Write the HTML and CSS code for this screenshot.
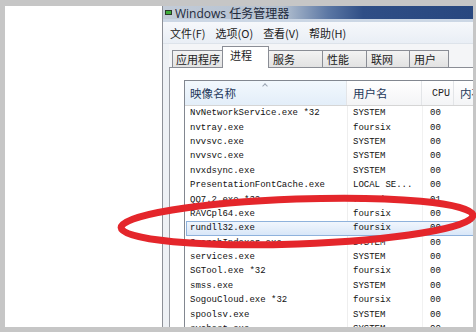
FILE: index.html
```html
<!DOCTYPE html>
<html>

<head>
    <meta charset="utf-8" />
    <title>Windows 任务管理器</title>
    <link rel="stylesheet" href="styles.css">
</head>

<body>
    <div class="sheet">
        <div class="blank"></div>

        <div class="window">
            <div class="titlebar">
                <span class="app-icon"></span>
                <span class="title">Windows 任务管理器</span>
            </div>

            <div class="menubar">
                <span>文件(F)</span>
                <span>选项(O)</span>
                <span>查看(V)</span>
                <span>帮助(H)</span>
            </div>

            <div class="client">
                <div class="tabstrip">
                    <div class="tab w-apps">应用程序</div>
                    <div class="tab active w-proc">进程</div>
                    <div class="tab w-svc">服务</div>
                    <div class="tab w-perf">性能</div>
                    <div class="tab w-net">联网</div>
                    <div class="tab w-user">用户</div>
                </div>

                <div class="panel">
                    <div class="listview">
                        <div class="lv-head">
                            <div class="col-name sorted">映像名称<span class="sort-arrow"></span></div>
                            <div class="col-user">用户名</div>
                            <div class="col-cpu">CPU</div>
                            <div class="col-mem">内存</div>
                        </div>

                        <div class="lv-row"><div class="col-name">NvNetworkService.exe *32</div><div class="col-user">SYSTEM</div><div class="col-cpu">00</div></div>
                        <div class="lv-row"><div class="col-name">nvtray.exe</div><div class="col-user">foursix</div><div class="col-cpu">00</div></div>
                        <div class="lv-row"><div class="col-name">nvvsvc.exe</div><div class="col-user">SYSTEM</div><div class="col-cpu">00</div></div>
                        <div class="lv-row"><div class="col-name">nvvsvc.exe</div><div class="col-user">SYSTEM</div><div class="col-cpu">00</div></div>
                        <div class="lv-row"><div class="col-name">nvxdsync.exe</div><div class="col-user">SYSTEM</div><div class="col-cpu">00</div></div>
                        <div class="lv-row"><div class="col-name">PresentationFontCache.exe</div><div class="col-user">LOCAL SE...</div><div class="col-cpu">00</div></div>
                        <div class="lv-row"><div class="col-name">QQ7.2.exe *32</div><div class="col-user">foursix</div><div class="col-cpu">01</div></div>
                        <div class="lv-row"><div class="col-name">RAVCpl64.exe</div><div class="col-user">foursix</div><div class="col-cpu">00</div></div>
                        <div class="lv-row selected"><div class="col-name">rundll32.exe</div><div class="col-user">foursix</div><div class="col-cpu">00</div></div>
                        <div class="lv-row"><div class="col-name">SearchIndexer.exe</div><div class="col-user">SYSTEM</div><div class="col-cpu">00</div></div>
                        <div class="lv-row"><div class="col-name">services.exe</div><div class="col-user">SYSTEM</div><div class="col-cpu">00</div></div>
                        <div class="lv-row"><div class="col-name">SGTool.exe *32</div><div class="col-user">foursix</div><div class="col-cpu">00</div></div>
                        <div class="lv-row"><div class="col-name">smss.exe</div><div class="col-user">SYSTEM</div><div class="col-cpu">00</div></div>
                        <div class="lv-row"><div class="col-name">SogouCloud.exe *32</div><div class="col-user">foursix</div><div class="col-cpu">00</div></div>
                        <div class="lv-row"><div class="col-name">spoolsv.exe</div><div class="col-user">SYSTEM</div><div class="col-cpu">00</div></div>
                        <div class="lv-row"><div class="col-name">svchost.exe</div><div class="col-user">SYSTEM</div><div class="col-cpu">00</div></div>
                    </div>
                </div>
            </div>
        </div>
    </div>

    <!-- hand drawn red circle over the selected process -->
    <svg class="mark" width="476" height="332" viewBox="0 0 476 332">
        <ellipse cx="297" cy="221.5" rx="176" ry="22.5" transform="rotate(-2 297 221.5)"
            fill="none" stroke="#e4262b" stroke-width="7" />
    </svg>
</body>

</html>
```

FILE: styles.css
```css
body {
    margin: 0;
    width: 476px;
    height: 332px;
    overflow: hidden;
    padding: 6px 3px 5px 5px;
    box-sizing: border-box;
    background-color: #c6c6c6;
    position: relative;
}

.sheet {
    display: flex;
    height: 321px;
    overflow: hidden;
    background-color: #fff;
}

.blank {
    flex: 0 0 157px;
}

.window {
    flex: 0 0 340px;
    display: flex;
    flex-direction: column;
    border-left: 1px solid #8d9097;
    background-color: #eef1f5;
}

.titlebar {
    flex-shrink: 0;
    height: 13px;
    display: flex;
    align-items: center;
    padding-left: 2px;
    border-bottom: 3px solid #ccd7e5;
    background: linear-gradient(to right, #c3ccd8 0px, #b3c0d0 120px, #5b77a4 165px, #2f4e86 200px, #28477f 310px);
}

.app-icon {
    width: 5px;
    height: 3px;
    border: 1px solid #2b3a2b;
    background-color: #3fae3a;
    margin-right: 3px;
}

.title {
    font-family: "Open Sans", "Noto Sans CJK SC", sans-serif;
    font-size: 12px;
    color: #1f2a3c;
    white-space: nowrap;
}

.menubar {
    flex-shrink: 0;
    height: 21px;
    display: flex;
    align-items: center;
    gap: 10px;
    padding-left: 7px;
    font-family: "Noto Sans CJK SC", sans-serif;
    font-size: 11px;
    color: #222;
    background: linear-gradient(#f6f8fb, #e9eef5);
    border-bottom: 1px solid #dde3ea;
    white-space: nowrap;
}

.client {
    margin-left: 6px;
    display: flex;
    flex-direction: column;
    flex: 1;
    min-height: 0;
}

.tabstrip {
    flex-shrink: 0;
    height: 23px;
    display: flex;
    align-items: flex-end;
    padding-left: 3px;
    background-color: #f4f5f7;
}

.tab {
    height: 17px;
    box-sizing: border-box;
    padding: 1px 0 0 4px;
    border: 1px solid #8a8d95;
    border-bottom: none;
    margin-right: -1px;
    background: linear-gradient(#f3f3f3, #e2e2e2);
    font-family: "Noto Sans CJK SC", sans-serif;
    font-size: 11px;
    line-height: 14px;
    color: #222;
    white-space: nowrap;
    overflow: hidden;
}

.tab.active {
    height: 22px;
    padding-left: 7px;
    background: #fff;
    position: relative;
    z-index: 1;
    margin-bottom: -1px;
}

.w-apps { width: 51px; padding-left: 3px; }
.w-proc { width: 47px; }
.w-svc { width: 55px; }
.w-perf { width: 45px; }
.w-net { width: 44px; }
.w-user { width: 40px; }

.panel {
    flex: 1;
    min-height: 0;
    border-top: 1px solid #8a8d95;
    border-left: 1px solid #9a9da4;
    background-color: #fff;
    padding: 12px 0 0 14px;
}

.listview {
    border-top: 1px solid #828790;
    border-left: 1px solid #828790;
    background-color: #fff;
}

.lv-head {
    height: 24px;
    display: flex;
    align-items: stretch;
    border-bottom: 1px solid #d5d5d5;
    background: linear-gradient(#ffffff, #f3f4f6);
    font-family: "Noto Sans CJK SC", sans-serif;
    font-size: 11.5px;
    color: #1e395b;
}

.lv-head > div {
    display: flex;
    align-items: center;
    box-sizing: border-box;
    border-right: 1px solid #e3e5e8;
    white-space: nowrap;
}

.lv-head .col-name {
    width: 162px;
    padding-left: 5px;
    position: relative;
}

.lv-head .col-name.sorted {
    background: linear-gradient(#f2f8fd, #e3eef9);
}

.lv-head .col-user {
    width: 75px;
    padding-left: 6px;
}

.lv-head .col-cpu {
    width: 32px;
    padding-left: 10px;
    font-family: "Liberation Mono", monospace;
    font-size: 10px;
    color: #222;
}

.lv-head .col-mem {
    padding-left: 6px;
    border-right: none;
}

.sort-arrow {
    position: absolute;
    left: 78px;
    top: 3px;
    width: 3px;
    height: 3px;
    border-left: 1px solid #9aa4b2;
    border-top: 1px solid #9aa4b2;
    transform: rotate(45deg);
}

.lv-row {
    height: 14.4px;
    box-sizing: border-box;
    display: flex;
    align-items: center;
    margin-left: 1px;
    border: 1px solid transparent;
    font-family: "Liberation Mono", monospace;
    font-size: 9px;
    color: #111;
    white-space: nowrap;
    background-image: linear-gradient(to right, transparent 160px, #eeeeee 160px, #eeeeee 161px, transparent 161px, transparent 235px, #f1f1f1 235px, #f1f1f1 236px, transparent 236px);
}

.lv-row.selected {
    border-color: #8fb2dc;
    background: linear-gradient(#f1f6fd, #d9e7f8);
}

.lv-row .col-name {
    width: 160px;
    padding-left: 3px;
    box-sizing: border-box;
}

.lv-row .col-user {
    width: 75px;
    padding-left: 6px;
    box-sizing: border-box;
}

.lv-row .col-cpu {
    width: 32px;
    padding-left: 8px;
    box-sizing: border-box;
}

.mark {
    position: absolute;
    left: 0;
    top: 0;
    pointer-events: none;
}
```
